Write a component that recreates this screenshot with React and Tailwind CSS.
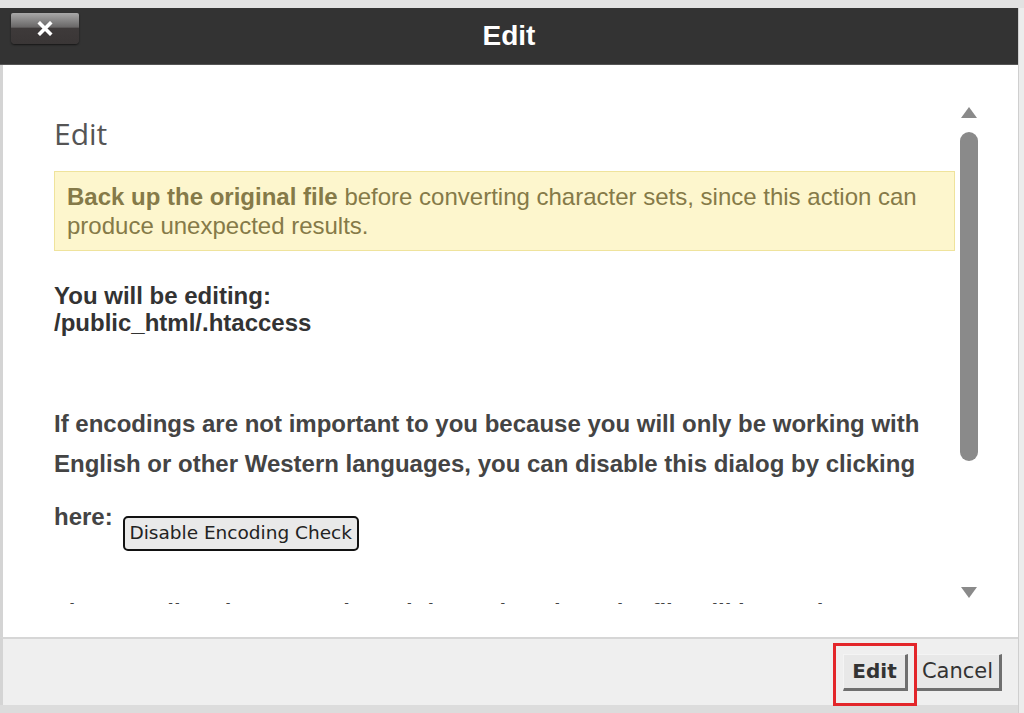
export default function App() {
  const arial = { fontFamily: '"Liberation Sans", Arial, sans-serif' };
  return (
    <div className="w-[1024px] h-[713px] bg-[#e3e3e3] overflow-hidden flex flex-col">
      <div className="h-[8px] bg-[#e2e2e2] shrink-0" />
      <div className="flex flex-1">
        <div className="w-[1018px] flex flex-col">
          {/* header */}
          <div className="h-[57px] bg-[#333333] border-b border-[#555] relative flex items-center justify-center shrink-0">
            <button className="absolute left-[11px] top-[5px] w-[68px] h-[31px] rounded-b-[4px] rounded-t-[2px] bg-[linear-gradient(#a8a8a8_0%,#6a6868_45%,#3e3a3a_50%,#3a3636_100%)] shadow-[0_1px_2px_rgba(0,0,0,0.6)] flex items-center justify-center">
              <svg width="16" height="15" viewBox="0 0 16 15">
                <path d="M3 2.5 L13 12.5 M13 2.5 L3 12.5" stroke="white" strokeWidth="3.6" strokeLinecap="square" />
              </svg>
            </button>
            <span className="text-white font-bold text-[28px] leading-none" style={arial}>Edit</span>
          </div>
          {/* body */}
          <div className="h-[572px] bg-white border-l-[3px] border-[#d4d4d4] flex shrink-0">
            <div className="flex-1 h-[539px] overflow-hidden pl-[51px] pr-[5px] pt-[51px]">
              <h2 className="text-[30px] leading-[36px] text-[#555] font-normal" style={{ fontFamily: '"Open Sans", sans-serif' }}>Edit</h2>
              <div className="mt-[19px] border border-[#efe39c] bg-[#fdf6cd] px-[12px] py-[10px] text-[24px] leading-[29px] text-[#857a48]" style={arial}>
                <b>Back up the original file</b> before converting character sets, since this action can produce unexpected results.
              </div>
              <div className="mt-[31px] text-[24px] leading-[27px] font-bold text-[#333]" style={arial}>
                <div>You will be editing:</div>
                <div>/public_html/.htaccess</div>
              </div>
              <div className="mt-[68px] text-[24px] leading-[40px] font-bold text-[#444]" style={arial}>
                <div className="whitespace-nowrap">If encodings are not important to you because you will only be working with</div>
                <div className="whitespace-nowrap">English or other Western languages, you can disable this dialog by clicking</div>
                <div className="flex items-start">
                  <span className="mt-[19px] leading-[28px]">here:</span>
                  <button className="ml-[10px] mt-[32px] h-[35px] w-[236px] bg-[#e9e9e9] border-2 border-[#111] rounded-[5px] text-[18.5px] leading-none text-[#222] font-normal whitespace-nowrap" style={{ fontFamily: '"DejaVu Sans", sans-serif' }}>
                    Disable Encoding Check
                  </button>
                </div>
                <div className="mt-[42px] whitespace-nowrap">The encoding that you selected determines how the file will be read.</div>
              </div>
            </div>
            <div className="w-[18px] mr-[40px] pt-[42px] flex flex-col items-center">
              <svg width="16" height="11" viewBox="0 0 16 11"><path d="M8 0 L16 11 L0 11 Z" fill="#8a8a8a" /></svg>
              <div className="mt-[14px] w-[18px] h-[329px] rounded-full bg-[#8a8a8a]" />
              <div className="flex-1" />
              <svg width="16" height="11" viewBox="0 0 16 11" className="mb-[39px]"><path d="M0 0 L16 0 L8 11 Z" fill="#8a8a8a" /></svg>
            </div>
          </div>
          {/* footer */}
          <div className="h-[68px] bg-[#efefef] border-t-2 border-[#d6d6d6] border-l-[3px] border-l-[#d4d4d4] flex items-center justify-end pr-[16px] gap-[7px] relative shrink-0">
            <button className="w-[65px] h-[37px] bg-[#e8e8e8] border-t border-l border-[#f4f4f4] border-r-[3px] border-b-[3px] border-r-[#6f6f6f] border-b-[#6f6f6f] text-[20px] font-bold text-[#333] leading-none" style={{ fontFamily: '"DejaVu Sans", sans-serif' }}>Edit</button>
            <button className="w-[87px] h-[37px] bg-[#e8e8e8] border-t border-l border-[#f4f4f4] border-r-[3px] border-b-[3px] border-r-[#6f6f6f] border-b-[#6f6f6f] text-[21px] text-[#333] leading-none" style={{ fontFamily: '"DejaVu Sans", sans-serif' }}>Cancel</button>
            <div className="absolute left-[830px] top-[4px] w-[84px] h-[63px] border-[3px] border-[#e3262a] pointer-events-none" />
          </div>
          <div className="flex-1 bg-[#dcdcdc]" />
        </div>
        <div className="flex-1 bg-[#ececec] border-l border-[#cfcfcf]" />
      </div>
    </div>
  );
}
